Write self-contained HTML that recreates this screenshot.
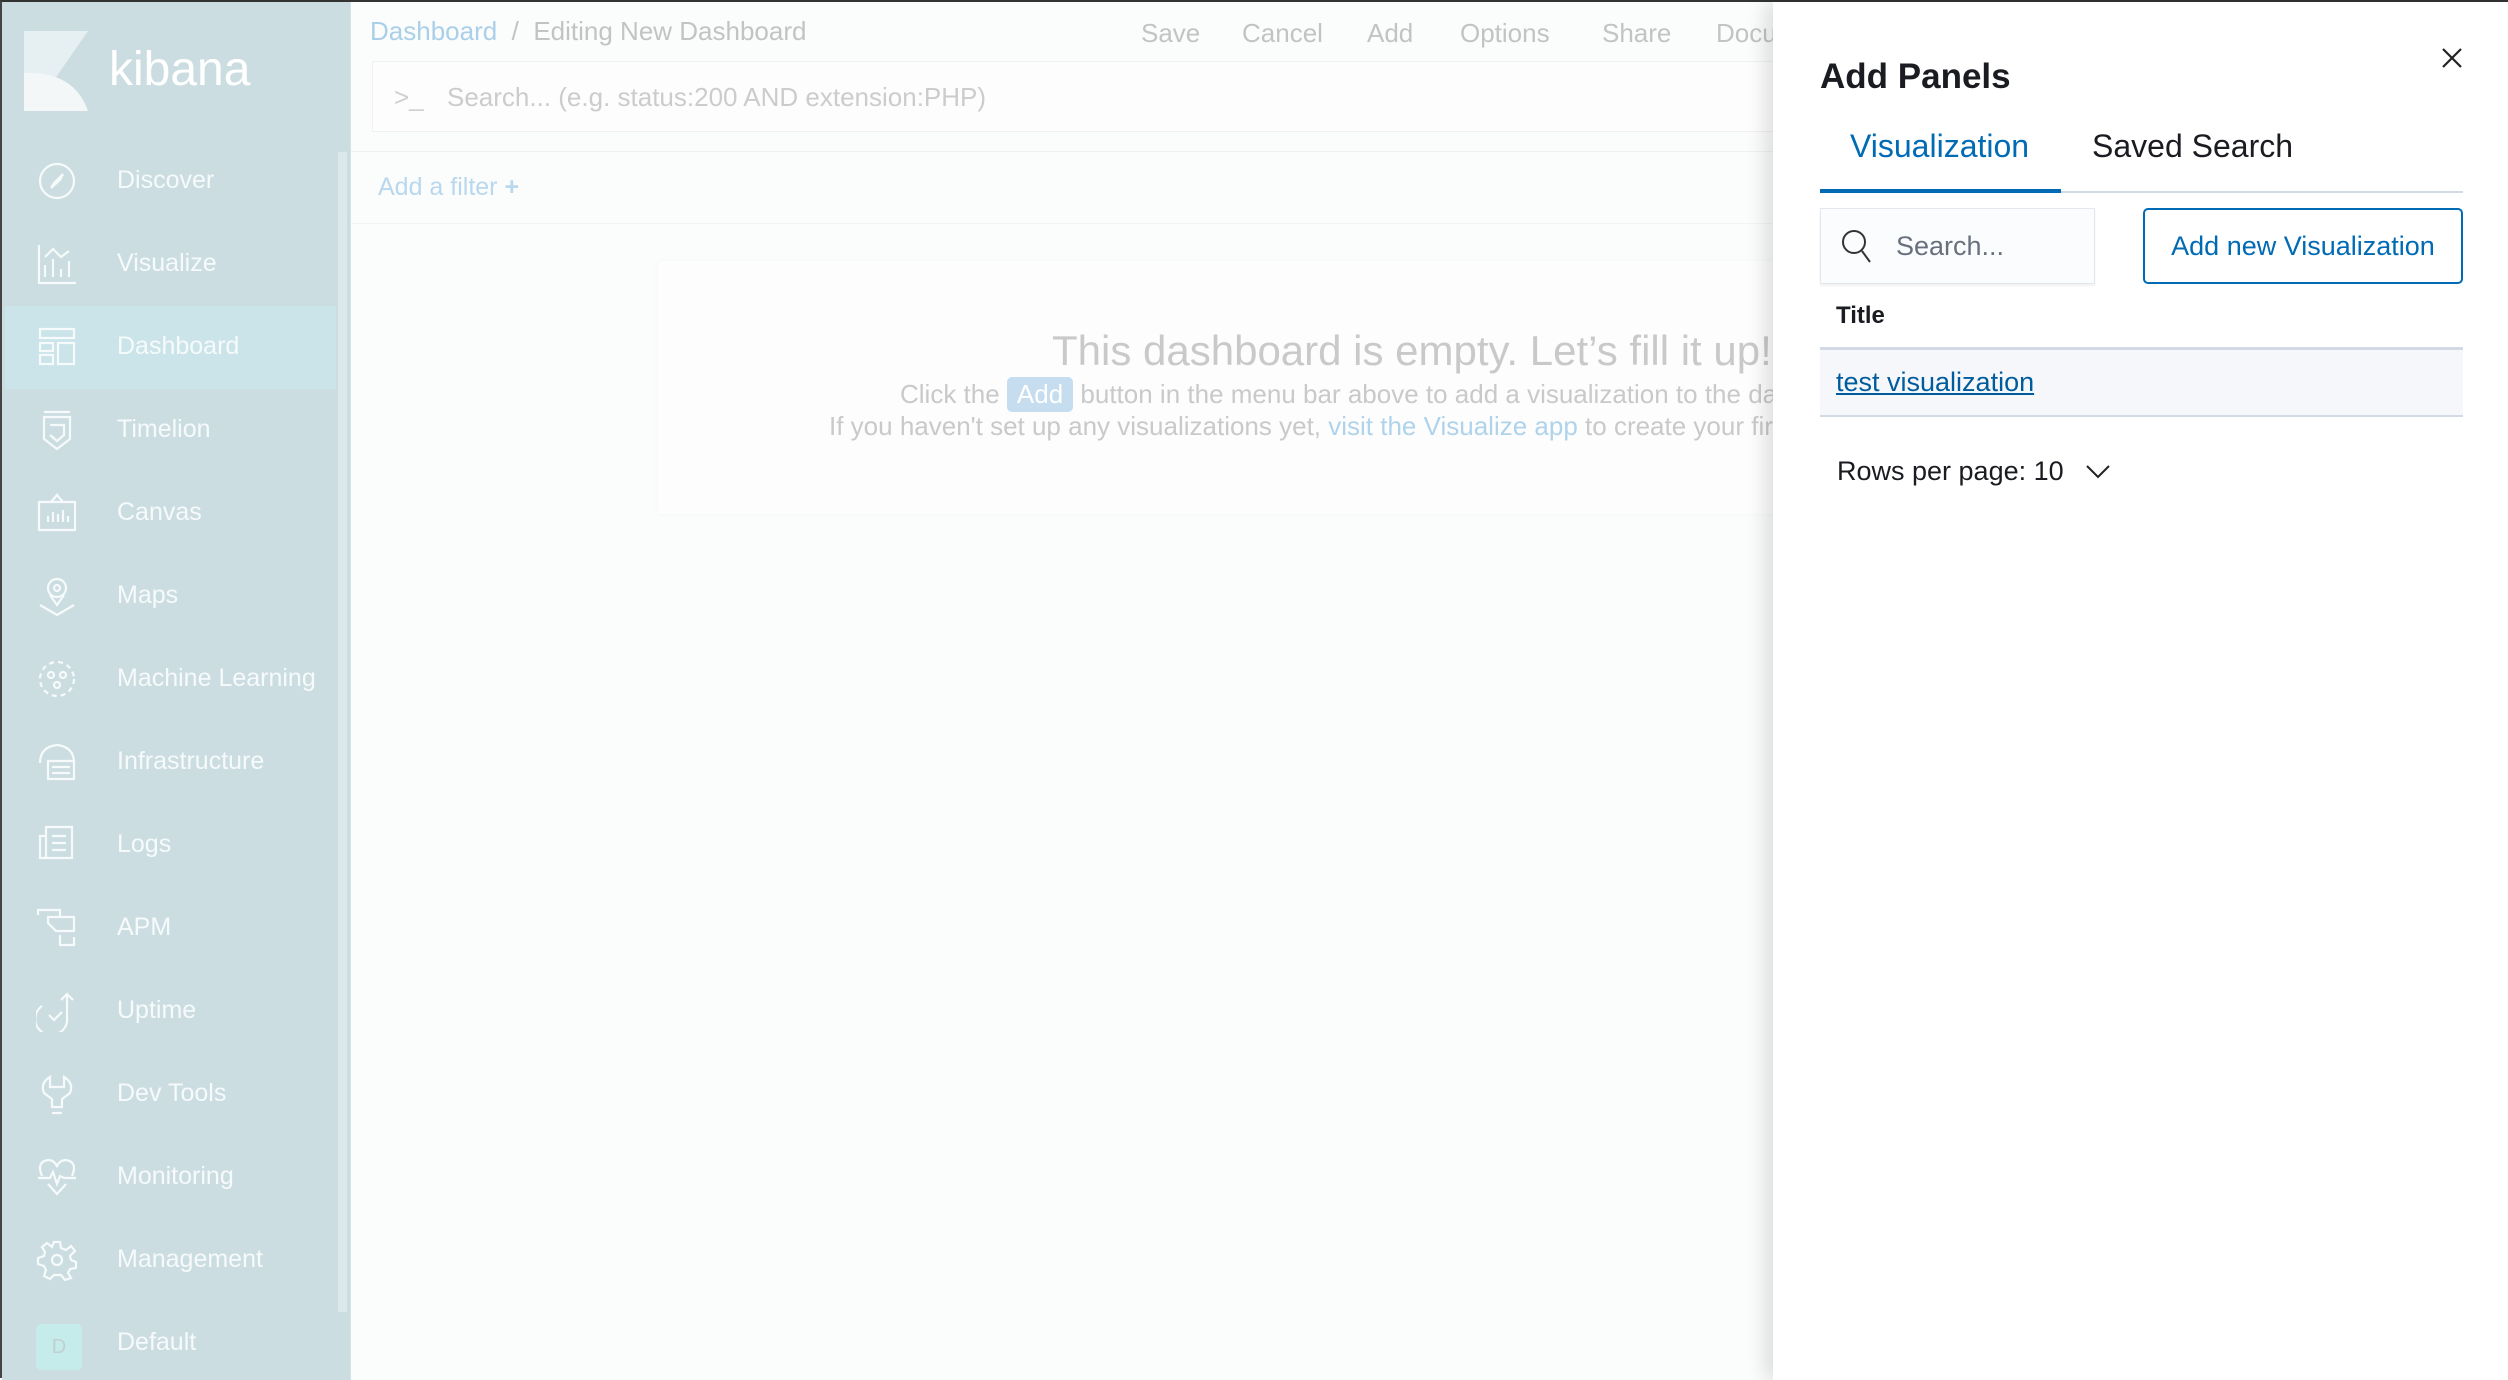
<!DOCTYPE html>
<html><head><meta charset="utf-8"><style>
*{margin:0;padding:0;box-sizing:border-box}
body{width:2508px;height:1378px;overflow:hidden;background:#fbfcfc;font-family:"Liberation Sans",sans-serif;position:relative;border-top:2px solid #333;border-left:2px solid #444}
.a{position:absolute;white-space:nowrap}
#side{position:absolute;left:0;top:0;width:349px;height:1378px;background:#cbdde1;border-right:1px solid #d5e3e6}
.nav{position:absolute;left:115px;font-size:25px;color:#f6fafb}
.ic{position:absolute;left:34px;width:42px;height:42px}
.ic *{fill:none;stroke:#f6fafb;stroke-width:2.2}
.menu{font-size:26px;color:#c3c3c3;top:16px}
.fly{position:absolute;left:1771px;top:0;width:737px;height:1378px;background:#fff;box-shadow:-8px 0 18px rgba(0,0,0,.12);border-right:2px solid #555}
</style></head><body>
<div id="side">
<svg class="a" style="left:22px;top:29px" width="64" height="80" viewBox="0 0 64 80"><polygon points="0,0 64,0 28,52 0,80" fill="#e6eff1"/><path d="M0,42 Q50,40 64,80 L0,80Z" fill="#f3f7f8"/></svg>
<div class="a" style="left:107px;top:40px;font-size:48px;color:#fff">kibana</div>
<div class="a" style="left:3px;top:304px;width:331px;height:83px;background:#cbe4ea"></div>
<div class="a" style="left:336px;top:150px;width:9px;height:1160px;background:#dce8ea"></div>
<svg class="ic" style="top:158px" viewBox="0 0 42 42"><circle cx="21" cy="21" r="17"/><path d="M27 14 L18 23 L15 28 L24 20Z"/></svg>
<div class="nav a" style="top:164px">Discover</div>
<svg class="ic" style="top:241px" viewBox="0 0 42 42"><path d="M3 2V40H40M9 34V22M17 34V16M25 34V26M33 34V18M9 14L17 6 25 14 33 8"/></svg>
<div class="nav a" style="top:247px">Visualize</div>
<svg class="ic" style="top:324px" viewBox="0 0 42 42"><rect x="4" y="3" width="34" height="9"/><rect x="4" y="17" width="13" height="8"/><rect x="4" y="29" width="13" height="9"/><rect x="22" y="17" width="16" height="21"/></svg>
<div class="nav a" style="top:330px">Dashboard</div>
<svg class="ic" style="top:407px" viewBox="0 0 42 42"><path d="M8 3H34M8 8H34V30L21 40 8 30Z M14 16H28V26L21 32 14 26"/></svg>
<div class="nav a" style="top:413px">Timelion</div>
<svg class="ic" style="top:490px" viewBox="0 0 42 42"><path d="M3 10H39V38H3Z M15 10L21 3 27 10 M12 30V24M17 30V20M22 30V22M27 30V18M32 30V24"/></svg>
<div class="nav a" style="top:496px">Canvas</div>
<svg class="ic" style="top:573px" viewBox="0 0 42 42"><circle cx="21" cy="13" r="9"/><circle cx="21" cy="13" r="3"/><path d="M14 20L21 30 28 20M4 30L21 40 38 30"/></svg>
<div class="nav a" style="top:579px">Maps</div>
<svg class="ic" style="top:656px" viewBox="0 0 42 42"><circle cx="21" cy="21" r="17" stroke-dasharray="5 4"/><circle cx="15" cy="17" r="3"/><circle cx="27" cy="17" r="3"/><circle cx="21" cy="27" r="3"/></svg>
<div class="nav a" style="top:662px">Machine Learning</div>
<svg class="ic" style="top:739px" viewBox="0 0 42 42"><path d="M4 22Q4 6 21 4 38 6 38 22M12 20H38V38H12ZM16 26H34M16 32H34"/></svg>
<div class="nav a" style="top:745px">Infrastructure</div>
<svg class="ic" style="top:822px" viewBox="0 0 42 42"><path d="M10 3H36V34H4V12H10ZM10 3V34M16 12H30M16 19H30M16 26H30"/></svg>
<div class="nav a" style="top:828px">Logs</div>
<svg class="ic" style="top:905px" viewBox="0 0 42 42"><path d="M2 8V3H24V10M12 10H38V24H20L12 16ZM24 28V38H38V30"/></svg>
<div class="nav a" style="top:911px">APM</div>
<svg class="ic" style="top:988px" viewBox="0 0 42 42"><path d="M6 16A16 16 0 1 0 31 32V4M25 10L31 4 37 10M13 25L18 30 26 22" stroke-dasharray=""/></svg>
<div class="nav a" style="top:994px">Uptime</div>
<svg class="ic" style="top:1071px" viewBox="0 0 42 42"><path d="M14 4Q4 10 8 20L16 26V34H26V26L34 20Q38 10 28 4V14H14ZM16 40H26"/></svg>
<div class="nav a" style="top:1077px">Dev Tools</div>
<svg class="ic" style="top:1154px" viewBox="0 0 42 42"><path d="M6 20Q0 6 12 4 18 4 21 10 24 4 30 4 42 6 36 20M2 22H14L17 16 21 28 24 20 28 22H40M12 28L21 38 30 28"/></svg>
<div class="nav a" style="top:1160px">Monitoring</div>
<svg class="ic" style="top:1237px" viewBox="0 0 42 42"><path d="M18 3H24L25 9 30 11 35 7 39 12 34 17 35 21 40 23V29L34 30 32 34 35 39 29 41 25 36H18L14 40 8 37 10 31 8 27 2 25V19L8 17 9 13 6 8 11 4 16 8Z"/><circle cx="21" cy="21" r="5"/></svg>
<div class="nav a" style="top:1243px">Management</div>
<div class="a" style="left:34px;top:1322px;width:46px;height:46px;border-radius:5px;background:#c5ecea;color:#c2cfd2;font-size:20px;text-align:center;line-height:46px">D</div>
<div class="nav a" style="top:1326px">Default</div>
</div>

<div class="a" style="left:368px;top:14px;font-size:26px;color:#aacfe9">Dashboard <span style="color:#c3c3c3">&nbsp;/&nbsp; Editing New Dashboard</span></div>
<div class="a menu" style="left:1139px">Save</div>
<div class="a menu" style="left:1240px">Cancel</div>
<div class="a menu" style="left:1365px">Add</div>
<div class="a menu" style="left:1458px">Options</div>
<div class="a menu" style="left:1600px">Share</div>
<div class="a menu" style="left:1714px">Documentation</div>
<div class="a" style="left:370px;top:59px;width:1500px;height:71px;border:1px solid #f1f1f1;background:#fdfdfd"></div>
<div class="a" style="left:392px;top:80px;font-size:26px;color:#cfcfcf">&gt;_</div>
<div class="a" style="left:445px;top:80px;font-size:26px;color:#cccccc">Search... (e.g. status:200 AND extension:PHP)</div>
<div class="a" style="left:349px;top:149px;width:1500px;height:1px;background:#f0f0f0"></div>
<div class="a" style="left:376px;top:171px;font-size:25px;color:#b9d8ee">Add a filter <b>+</b></div>
<div class="a" style="left:349px;top:221px;width:1500px;height:1px;background:#f3f3f3"></div>
<div class="a" style="left:656px;top:259px;width:1200px;height:253px;background:#fdfdfd;box-shadow:0 0 6px rgba(0,0,0,.03)"></div>
<div class="a" style="left:1050px;top:325px;font-size:42px;color:#c9c9c9">This dashboard is empty. Let’s fill it up!</div>
<div class="a" style="left:898px;top:375px;font-size:26px;color:#c9c9c9">Click the <span style="display:inline-block;background:#c5ddef;color:#fff;border-radius:5px;padding:2px 10px">Add</span> button in the menu bar above to add a visualization to the dashboard.</div>
<div class="a" style="left:827px;top:409px;font-size:26px;color:#c9c9c9">If you haven't set up any visualizations yet, <span style="color:#b0d3ec">visit the Visualize app</span> to create your first visualization.</div>

<div class="fly">
<div class="a" style="left:47px;top:55px;font-size:35px;font-weight:bold;color:#1a1c21">Add Panels</div>
<svg class="a" style="left:668px;top:45px" width="22" height="22" viewBox="0 0 22 22"><path d="M2 2L20 20M20 2L2 20" stroke="#222" stroke-width="2.2"/></svg>
<div class="a" style="left:77px;top:126px;font-size:32px;color:#006bb4">Visualization</div>
<div class="a" style="left:319px;top:126px;font-size:32px;color:#1a1c21">Saved Search</div>
<div class="a" style="left:47px;top:189px;width:643px;height:2px;background:#d3dae6"></div>
<div class="a" style="left:47px;top:187px;width:241px;height:4px;background:#006bb4"></div>
<div class="a" style="left:47px;top:206px;width:275px;height:76px;background:#fbfcfd;border:1px solid #e4e8ee;box-shadow:0 2px 2px rgba(0,0,0,.06)"></div>
<svg class="a" style="left:67px;top:226px" width="34" height="36" viewBox="0 0 34 36"><circle cx="14" cy="14" r="11" fill="none" stroke="#333" stroke-width="2"/><path d="M22 23L30 34" stroke="#333" stroke-width="2"/></svg>
<div class="a" style="left:123px;top:229px;font-size:27px;color:#69707d">Search...</div>
<div class="a" style="left:370px;top:206px;width:320px;height:76px;border:2px solid #006bb4;border-radius:5px;color:#006bb4;font-size:27px;text-align:center;line-height:72px">Add new Visualization</div>
<div class="a" style="left:63px;top:300px;font-size:24px;font-weight:bold;color:#1a1c21">Title</div>
<div class="a" style="left:47px;top:345px;width:643px;height:70px;background:#f5f7fa;border-top:3px solid #d3dae6;border-bottom:2px solid #d3dae6"></div>
<div class="a" style="left:63px;top:365px;font-size:27px;color:#005c9c;text-decoration:underline">test visualization</div>
<div class="a" style="left:64px;top:454px;font-size:27px;color:#1a1c21">Rows per page: 10</div>
<svg class="a" style="left:312px;top:462px" width="26" height="16" viewBox="0 0 26 16"><path d="M2 2L13 13 24 2" fill="none" stroke="#222" stroke-width="2"/></svg>
</div>
</body></html>
